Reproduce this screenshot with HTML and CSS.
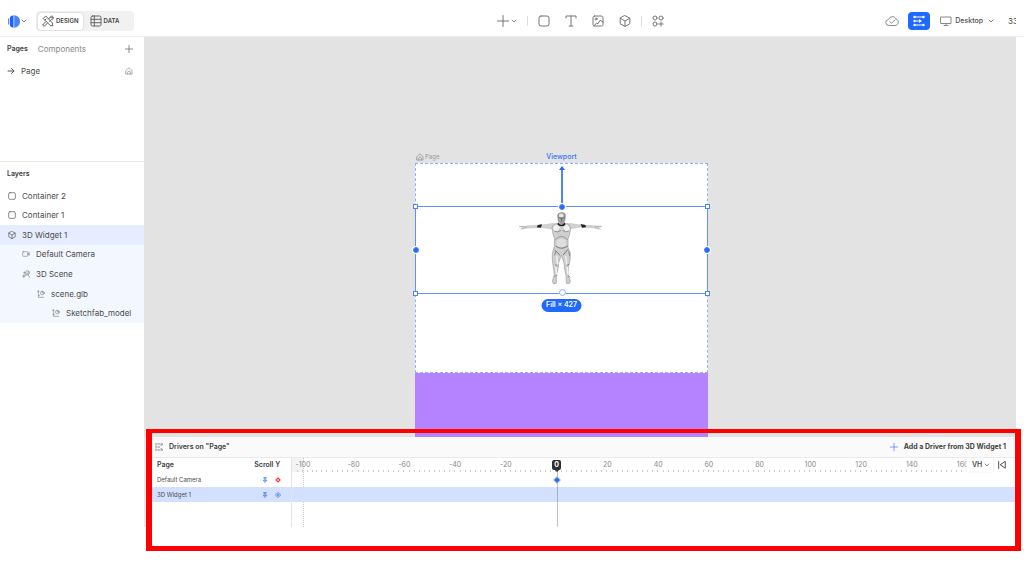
FILE: index.html
```html
<!DOCTYPE html>
<html lang="en">
<head>
<meta charset="utf-8">
<title>Page – Design</title>
<link rel="stylesheet" href="styles.css">
</head>
<body>
<svg class="defs" aria-hidden="true">
  <symbol id="chev" viewBox="0 0 6 6"><path d="M1 2l2 2 2-2"/></symbol>
  <symbol id="plus" viewBox="0 0 12 12"><path d="M6 .5v11M.5 6h11"/></symbol>
  <symbol id="box" viewBox="0 0 12 12"><rect x="1" y="1" width="10" height="10" rx="2"/></symbol>
  <symbol id="cube" viewBox="0 0 12 12"><path d="M6 .6l4.8 2.6v5.6L6 11.400 1.200 8.800V3.200zM1.200 3.200L6 6l4.800-2.800M6 6v5.400"/></symbol>
  <symbol id="home" viewBox="0 0 12 12"><path d="M1.500 5.200L6 1.200l4.500 4v5.300h-9zM4 10.500V8a2 2 0 0 1 4 0v2.500"/></symbol>
  <symbol id="mesh" viewBox="0 0 12 12"><path d="M2 1v10h8M1 2.500l1-1.500 1 1.500M2 8h2"/><circle cx="8" cy="4.500" r="2.800"/><path d="M8 2v2.500h2.500"/></symbol>
  <symbol id="pin" viewBox="0 0 8 8"><path d="M2.300 1h3.400M3 1v2.500L1.500 5h5L5 3.500V1M4 5v2.500"/></symbol>
</svg>
<div class="app">
  <header class="topbar">
    <div class="brand">
      <button class="logo" aria-label="Main menu">
        <svg width="12" height="13" viewBox="0 0 12 13"><path d="M.7 3.500v6" stroke="#3d7bff" stroke-width="1.100"/><path d="M2 2q1.500-1.500 3.500-1.800v12.600Q3.500 12.500 2 11z" fill="#1c62ff"/><path d="M6.200.3C9.500.5 12 3 12 6.500s-2.500 6-5.800 6.200z" fill="#4a85ff"/></svg>
        <svg class="i i6"><use href="#chev"/></svg>
      </button>
      <div class="modes">
        <button class="mode on"><svg class="i i12" viewBox="0 0 12 12"><path d="M3.500 1.200L1.200 3.500l7 7 2.600.4-.4-2.600zM3 5l1-1M1 9.500l3-3M1 9.500c-.6 1 .6 2.200 1.600 1.500l3-3M6.500 4L8 2.500M8 2.500c.3-1.300 1.200-1.600 2.500-1.300L9.300 2.600l.5.600 1.500-1c.3 1.600-.8 2.600-2 2.400L7.500 6.200"/></svg>DESIGN</button>
        <button class="mode"><svg class="i i12" viewBox="0 0 12 12"><rect x="1" y="1" width="10" height="10" rx="1.500"/><path d="M1 4.300h10M1 7.700h10M4.300 1v10"/></svg>DATA</button>
      </div>
    </div>
    <div class="tools">
      <nav class="insert">
        <button class="add" aria-label="Insert"><svg class="i i12"><use href="#plus"/></svg><svg class="i i6"><use href="#chev"/></svg></button>
        <i class="sep"></i>
        <div class="kinds">
          <button aria-label="Container"><svg class="i i12"><use href="#box"/></svg></button>
          <button aria-label="Text"><svg class="i i12" viewBox="0 0 12 12"><path d="M1 3V1h10v2M6 1v10M4.200 11h3.600"/></svg></button>
          <button aria-label="Image"><svg class="i i12" viewBox="0 0 12 12"><rect x="1" y="1" width="10" height="10" rx="1.500"/><circle cx="4" cy="4" r="1"/><path d="M2 11l2.500-3 1.500.7L8 5.300l3 1.700"/></svg></button>
          <button aria-label="3D object"><svg class="i i12"><use href="#cube"/></svg></button>
        </div>
        <i class="sep"></i>
        <button aria-label="More elements"><svg class="i i12" viewBox="0 0 12 12"><circle cx="3" cy="3" r="2"/><circle cx="9" cy="3" r="2"/><circle cx="3" cy="9" r="2"/><path d="M9 6.800v4.400M6.800 9h4.400"/></svg></button>
      </nav>
      <div class="view">
        <button aria-label="Saved"><svg class="i cloud" viewBox="0 0 14 12"><path d="M4 10.500a3 3 0 0 1-.5-6C5 1 9.500.5 11 4c3.300.8 3 6-.5 6.500zM4.800 6.500l1.800 1.700L10 4.800"/></svg></button>
        <button class="drivers-btn" aria-label="Drivers"><svg width="14" height="12" viewBox="0 0 14 12" fill="none" stroke="#fff"><path d="M2 2h10M2 6h6M2 10h10"/><g fill="#fff" stroke="none"><circle cx="2.500" cy="2" r="1.200"/><circle cx="11.500" cy="2" r="1.200"/><circle cx="2.500" cy="6" r="1.200"/><path d="M7 4l3 2-3 2z"/><circle cx="2.500" cy="10" r="1.200"/><circle cx="11.500" cy="10" r="1.200"/></g></svg></button>
        <button class="device"><svg class="i i12" viewBox="0 0 12 12"><path d="M1 2h10v6.500H1zM6 8.500v2M4 10.500h4"/></svg>Desktop<svg class="i i6"><use href="#chev"/></svg></button>
        <span class="zoom">33</span>
      </div>
    </div>
  </header>
  <div class="body">
    <aside class="side">
      <section class="pages">
        <div class="tabs"><button class="tab on">Pages</button><button class="tab">Components</button><button class="end" aria-label="Add page"><svg class="i i8 dark"><use href="#plus"/></svg></button></div>
        <div class="page-row"><svg class="i i8 dark" viewBox="0 0 8 8"><path d="M1 4h6M4.500 1.500L7 4 4.500 6.500"/></svg><span>Page</span><svg class="i i8 end"><use href="#home"/></svg></div>
      </section>
      <section class="layers">
        <h2>Layers</h2>
        <ul>
          <li><svg class="i i8 dark"><use href="#box"/></svg>Container 2</li>
          <li><svg class="i i8 dark"><use href="#box"/></svg>Container 1</li>
          <li class="picked"><svg class="i i8 dark"><use href="#cube"/></svg>3D Widget 1</li>
          <li class="child l1"><svg class="i i8" viewBox="0 0 12 12"><rect x="1" y="2.500" width="7.500" height="7" rx="1"/><path d="M11 4v4L9.500 7V5z"/></svg>Default Camera</li>
          <li class="child l1"><svg class="i i8" viewBox="0 0 12 12"><path d="M0 9h4M2.500 3.500h3M4 3L2 11M5 8.500l-1.500 2M6 7.500C4 4 6 1 8.500 1S12 4 10.500 6.500L6 7.500M9 7l2.500 4M9.500 2v3H7"/></svg>3D Scene</li>
          <li class="child l2"><svg class="i i8"><use href="#mesh"/></svg>scene.glb</li>
          <li class="child l3"><svg class="i i8"><use href="#mesh"/></svg>Sketchfab_model</li>
        </ul>
      </section>
    </aside>
    <main class="editor">
      <div class="canvas">
        <div class="stage">
          <div class="stage-name"><svg class="i i8"><use href="#home"/></svg>Page</div>
          <div class="viewport-name">Viewport</div>
          <div class="viewport"></div>
          <div class="purple"></div>
          <div class="selection">
            <i class="arrow"></i>
            <svg class="robot" viewBox="57 48 252 222" role="img" aria-label="3D robot model">
              <g stroke-linejoin="round" stroke-linecap="round">
                <path d="M160 85l-28 4-24 2-30 2-20 2 12 2-8 6 18-3 42-3 38 6zM208 85l28 4 24 2 30 2 16 1-12 3 8 6-18-4-42-3-36 6z" fill="#d2d2d2" stroke="#aaa" stroke-width="1"/>
                <path d="M114 90l12-2-3 10-13-1zM242 87l14 3 2 7-12 1z" fill="#222"/>
                <path d="M58 95l16 0M66 101l14-5M286 94l18 1M284 97l12 5" stroke="#888" fill="none"/>
                <path d="M163 87q21-8 43 0l6 14-4 20-4 12 0 24 7 18-1 22-5 18-1 24 7 18-2 8-10 0-1-24-4-18-2-20-8-23-8 23-2 20-5 18 0 24-8 2-4-8 6-20-3-22-3-22 0-20 6-20 1-24-5-14-3-18z" fill="#cfcfcf" stroke="#9b9b9b" stroke-width="2"/>
                <path d="M173 61q0-8 12-8t11 9l-2 16-9 9-9-8z" fill="#a4a4a4" stroke="#777" stroke-width="2"/>
                <path d="M178 56h10l3 8-6 3-8-2z" fill="#e8e8e8"/><path d="M176 68l8 2 9-2M185 70v9" stroke="#555" fill="none" stroke-width="2"/>
                <path d="M174 82q10 15 20 0l2 7q-10 10-23 0z" fill="#1f1f1f"/>
                <path d="M160 96l8-7 12 8-8 11-10-1zM209 96l-8-7-12 8 8 11 11-1z" fill="#f2f2f2"/>
                <path d="M164 109q10 5 18-2M188 107q9 7 18 1M167 133q16-18 35 0" stroke="#777" stroke-width="2" fill="none"/>
                <path d="M171 136q14-10 26 0v18q-13 8-27 0z" fill="#dedede"/>
                <path d="M168 154q16 12 34 0M165 166l13 13M203 164l-13 15" stroke="#444" stroke-width="2" fill="none"/>
                <path d="M167 170l-3 10M206 170l3 12M166 209l5 3M201 211l6-3M164 244l7-4M206 242l4 5" stroke="#666" stroke-width="2" fill="none"/>
                <path d="M170 184l3 22M197 184l3 22M168 217l1 20M202 217l1 20" stroke="#f3f3f3" stroke-width="4" fill="none"/>
              </g>
            </svg>
            <i class="h sq tl"></i><i class="h sq tr"></i><i class="h sq bl"></i><i class="h sq br"></i>
            <i class="h dot t"></i><i class="h dot l"></i><i class="h dot r"></i><i class="h ring b"></i>
            <span class="size">Fill × 427</span>
          </div>
        </div>
      </div>
      <section class="timeline">
        <div class="tl-head">
          <svg class="i i8 dark" viewBox="0 0 12 12"><path d="M1.500 0v3M1.500 5v2M1.500 9v3M4 1.500h4M4 6h3M4 10.500h4M9 4l2-2M9 8l2 2M10.500 0v2M10.500 10v2"/></svg>
          <h2>Drivers on "Page"</h2>
          <button class="end"><svg class="i i8 blue"><use href="#plus"/></svg>Add a Driver from 3D Widget 1</button>
        </div>
        <table>
          <colgroup><col class="c-name"><col class="c-driver"><col></colgroup>
          <thead>
            <tr>
              <th>Page</th><th class="mid">Scroll Y</th>
              <td class="plot">
                <div class="ruler">
                  <div class="mark first"><span>-100</span></div><div class="mark"><span>-80</span></div><div class="mark"><span>-60</span></div><div class="mark"><span>-40</span></div><div class="mark"><span>-20</span></div>
                  <div class="mark"><span class="now">0</span><i class="playhead"></i></div>
                  <div class="mark"><span>20</span></div><div class="mark"><span>40</span></div><div class="mark"><span>60</span></div><div class="mark"><span>80</span></div><div class="mark"><span>100</span></div><div class="mark"><span>120</span></div><div class="mark"><span>140</span></div><div class="mark"><span>160</span></div>
                </div>
                <div class="units"><button class="vh">VH<svg class="i i6"><use href="#chev"/></svg></button><button aria-label="Go to start"><svg class="i i8 dark" viewBox="0 0 8 8"><path d="M.7.5v7M7.300.8v6.400L2.500 4z"/></svg></button></div>
              </td>
            </tr>
          </thead>
          <tbody>
            <tr><td>Default Camera</td><td class="keys"><svg class="i i6 blue"><use href="#pin"/></svg><svg class="key" viewBox="0 0 6 6"><path d="M3 1L5 3 3 5 1 3z" fill="none" stroke="#ff3038" stroke-width="1.200"/></svg></td>
              <td class="plot"><div class="ruler"><div class="mark at0"><svg class="keyframe" viewBox="0 0 8 8"><path d="M4 .5L7.500 4 4 7.500.5 4z" fill="#2f6cf6" stroke="#b9cdfd"/></svg></div></div></td></tr>
            <tr class="picked"><td>3D Widget 1</td><td class="keys"><svg class="i i6 blue"><use href="#pin"/></svg><svg class="key" viewBox="0 0 6 6"><path d="M3 .4L5.600 3 3 5.600.4 3zM2 3h2M3 2v2" fill="none" stroke="#3c74f6" stroke-width=".8"/></svg></td><td class="plot"></td></tr>
            <tr class="rest"><td></td><td></td><td class="plot"></td></tr>
          </tbody>
        </table>
        <div class="highlight"></div>
      </section>
    </main>
  </div>
</div>
</body>
</html>
```
FILE: styles.css
```css
* { box-sizing: border-box; }
html { min-height: 100%; background: #fff; }
body { margin: 0; min-height: 100vh; background: #fff; color: #4c4c4c; font: 400 8px/10px Inter, "Liberation Sans", sans-serif; }
button { display: flex; align-items: center; margin: 0; padding: 0; border: 0; background: none; color: inherit; font: inherit; white-space: nowrap; }
h2 { margin: 0; font: 600 7px/10px Inter, sans-serif; color: #3d3d3d; }
svg { display: block; flex: none; }
.defs { position: absolute; width: 0; height: 0; }
.i { fill: none; stroke: #888; stroke-width: 1; stroke-linecap: round; stroke-linejoin: round; }
.i12 { width: 12px; height: 12px; }
.i8 { width: 8px; height: 8px; }
.i6 { width: 6px; height: 6px; }
.dark { stroke: #555; }
.blue { stroke: #3c74f6; }
.end { margin-left: auto; }

.app { min-height: 100vh; }
.topbar { display: flex; height: 37px; padding: 6px 8px 0 0; border-bottom: 1px solid #eee; }
.brand { display: flex; align-items: center; width: 144px; flex: none; padding-left: 8px; }
.logo { gap: 1px; width: 28px; }
.modes { display: flex; align-items: center; width: 98px; height: 20px; padding: 2px; border-radius: 4px; background: #f1f1f1; }
.mode { gap: 2px; height: 17px; padding: 0 7px; border-radius: 3px; font: 600 6px/10px Inter, sans-serif; color: #444; }
.mode.on { padding: 0 4px; background: #fff; box-shadow: 0 0 2px #bbb; }
.mode .i { stroke: #666; }
.tools { display: grid; grid-template-columns: 1fr auto 1fr; align-items: center; flex: 1; }
.insert { grid-column: 2; display: flex; align-items: center; gap: 10px; }
.insert .i12 { stroke: #777; }
.add { gap: 2px; }
.kinds { display: flex; gap: 15px; }
.sep { width: 1px; height: 10px; background: #ddd; }
.view { display: flex; align-items: center; justify-content: flex-end; }
.cloud { width: 14px; height: 12px; margin-right: 9px; }
.drivers-btn { justify-content: center; width: 22px; height: 18px; margin-right: 10px; border-radius: 4px; background: #1f69ff; }
.device { gap: 3px; font: 500 7px/10px Inter, sans-serif; }
.device .i6 { margin-left: 2px; }
.zoom { width: 8px; margin-left: 14px; overflow: hidden; }

.body { display: flex; padding-right: 8px; }
.side { width: 144px; flex: none; }
.pages { height: 125px; border-bottom: 1px solid #e8e8e8; padding: 7px 11px 0 7px; }
.tabs { display: flex; gap: 10px; }
.tab { color: #888; }
.tab.on { font: 600 7px/10px Inter, sans-serif; color: #3d3d3d; }
.page-row { display: flex; align-items: center; gap: 6px; margin-top: 12px; }
.layers h2 { padding: 7px; }
.layers ul { display: grid; grid-auto-rows: 1fr; height: 137px; margin: 0; padding: 0; list-style: none; }
.layers li { display: flex; align-items: center; gap: 6px; padding-left: 8px; }
.layers .picked { background: #e5edff; }
.layers .child { background: #f3f7ff; }
.layers .l1 { padding-left: 22px; }
.layers .l2 { padding-left: 37px; }
.layers .l3 { padding-left: 52px; }

.editor { flex: 1; min-width: 0; }
.canvas { position: relative; height: 400px; overflow: hidden; background: #e3e3e3; }
.stage { position: absolute; left: 271px; top: 126px; width: 293px; }
.stage-name, .viewport-name { position: absolute; top: -11px; font: 400 6px/10px Inter, sans-serif; color: #999; }
.stage-name { display: flex; align-items: center; gap: 1px; left: 1px; }
.viewport-name { left: 0; right: 0; text-align: center; font: 500 7px/10px Inter, sans-serif; color: #3474f8; }
.viewport { height: 210px; background: #fff; border: 1px dashed #8fb0ff; }
.purple { height: 64px; background: #b583ff; }
.selection { position: absolute; left: 0; right: 0; top: 43px; height: 88px; border: 1px solid #5f90ff; }
.robot { position: absolute; left: 103px; top: 4px; width: 84px; height: 74px; }
.arrow { position: absolute; left: 50%; bottom: 100%; width: 2px; height: 40px; margin-left: -1px; background: #4e85fa; }
.arrow::before { content: ""; position: absolute; left: -2px; top: -1px; border: 3px solid transparent; border-top: 0; border-bottom: 4px solid #2069fb; }
.h { position: absolute; width: 5px; height: 5px; margin: -3px; background: #fff; border: 1px solid #4d83fa; }
.dot { width: 6px; height: 6px; border-radius: 50%; background: #1f69ff; box-shadow: 0 0 0 1px #fff; }
.ring { width: 7px; height: 7px; border-radius: 50%; border-color: #8fb0fb; }
.tl, .bl { left: 0; }
.tr, .br { right: 0; }
.tl, .tr { top: 0; }
.bl, .br { bottom: 0; }
.t { left: 50%; top: 0; }
.b { left: 50%; bottom: 0; }
.l { left: 0; top: 50%; }
.r { right: 0; top: 50%; }
.size { position: absolute; left: 50%; top: 92px; transform: translateX(-50%); padding: 1px 5px 2px; border-radius: 7px; background: #1f69ff; color: #fff; font: 600 7px/10px Inter, sans-serif; white-space: nowrap; }

.timeline { position: relative; height: 90px; padding-left: 6px; border-left: 2px solid #ebebeb; }
.tl-head { display: flex; align-items: center; gap: 6px; height: 21px; padding: 0 10px 0 3px; border-bottom: 1px solid #eaeaea; background: #fafafa; }
.tl-head button { gap: 6px; font: 700 7px/10px Inter, sans-serif; color: #444; }
table { width: 100%; table-layout: fixed; border-collapse: collapse; font: 400 6px/10px Inter, sans-serif; }
.c-name { width: 92px; }
.c-driver { width: 47px; }
tr { height: 14px; }
tbody tr { height: 15px; }
tbody .rest { height: 25px; }
th, td { padding: 0 0 0 5px; text-align: left; vertical-align: middle; white-space: nowrap; }
th { font: 600 7px/10px Inter, sans-serif; color: #3d3d3d; }
th.mid { padding: 0; text-align: center; }
tr.picked td { background: #d3e0ff; }
.keys svg { display: inline-block; vertical-align: middle; }
td.keys { padding-left: 18px; }
.key { width: 6px; height: 6px; margin-left: 7px; }
td.plot { position: relative; padding: 0; border-left: 1px solid #e4e4e4; }
.ruler { display: grid; grid-template-columns: repeat(14, 1fr); margin: 0 28px 0 -14px; }
.mark { position: relative; height: 14px; padding-top: 2px; text-align: center; color: #888; }
.mark span { font-size: 7px; }
thead .mark::after { content: ""; position: absolute; left: 0; right: 0; bottom: 0; height: 2px; background: repeating-linear-gradient(90deg, transparent 0 8%, #ccc 8% 10%); }
thead .mark.first::after { left: 30%; background: repeating-linear-gradient(90deg, transparent 0 11%, #ccc 11% 14%); }
.first::before { content: ""; position: absolute; left: 14px; right: 24px; top: 0; height: 69px; border-right: 1px dotted #ccc; background: linear-gradient(#f3f3f3 14px, transparent 14px); }
.first span { position: relative; }
.mark .now { position: relative; z-index: 2; display: inline-block; width: 9px; border-radius: 2px; background: #303030; color: #fff; font-weight: 700; }
.now::after { content: ""; position: absolute; left: 2px; top: 9px; border: 3px solid transparent; border-bottom: 0; border-top-color: #303030; }
.playhead { position: absolute; z-index: 1; left: 50%; top: 12px; width: 1px; height: 57px; background: rgba(80, 80, 90, .35); }
.at0 { grid-column: 6; display: flex; justify-content: center; padding: 0; align-items: center; }
.keyframe { position: relative; z-index: 2; width: 8px; height: 8px; }
.units { position: absolute; z-index: 2; right: 0; top: 0; bottom: 0; width: 49px; display: flex; align-items: center; gap: 4px; background: #fff; }
.vh { gap: 2px; height: 14px; padding: 0 3px 0 5px; font: 600 7px/10px Inter, sans-serif; border-right: 1px solid #eee; box-shadow: -1px 0 2px #eee; }
.highlight { position: absolute; z-index: 5; left: 0; right: -5px; top: -8px; height: 122px; border: solid red; border-width: 4px 6px 5px; pointer-events: none; }
```
